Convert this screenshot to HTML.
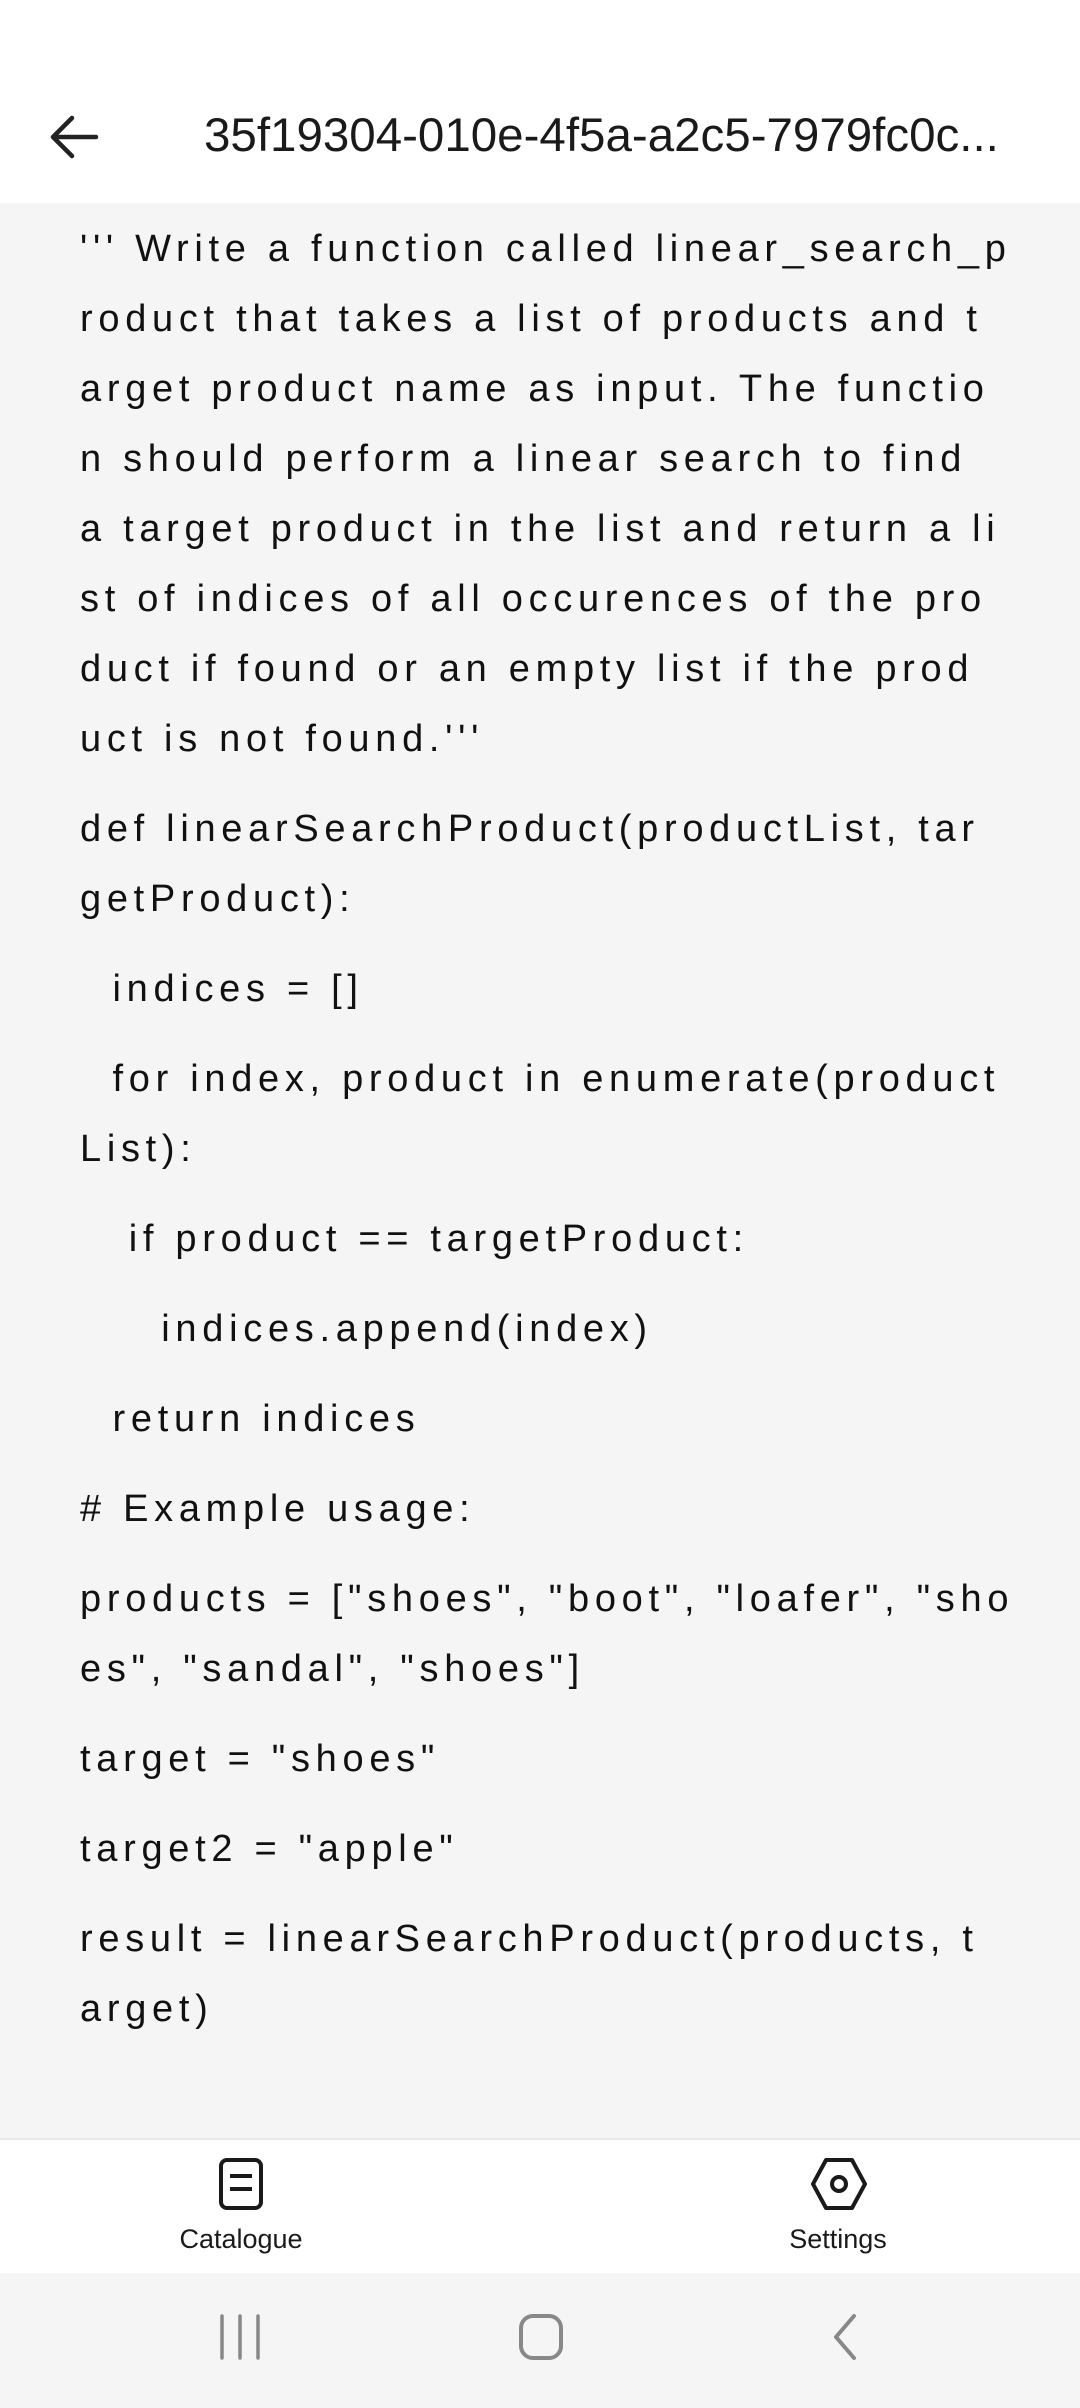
<!DOCTYPE html>
<html><head><meta charset="utf-8"><style>
*{margin:0;padding:0;box-sizing:border-box}
body{width:1080px;height:2408px;background:#f5f5f5;font-family:"Liberation Sans",sans-serif;position:relative;overflow:hidden;color:#111}
.top{position:absolute;left:0;top:0;width:1080px;height:203px;background:#fff}
.title{position:absolute;left:204px;top:107px;font-size:47.5px;line-height:58px;color:#1a1a1a;white-space:nowrap}
.content{position:absolute;left:0;top:203px;width:1080px;height:1935px;background:#f5f5f5}
.txt{position:absolute;left:80px;top:214px;font-size:38px;line-height:70px;letter-spacing:5.7px;white-space:pre;color:#111}
.p{margin-bottom:20px}
.nav{position:absolute;left:0;top:2138px;width:1080px;height:135px;background:#fff;border-top:2px solid #e8e8e8}
.lbl{position:absolute;top:84px;font-size:27px;color:#1a1a1a;transform:translateX(-50%)}
.sys{position:absolute;left:0;top:2273px;width:1080px;height:135px;background:#f5f5f5}
</style></head><body>
<div class="top">
<svg style="position:absolute;left:48px;top:112px" width="52" height="50" viewBox="0 0 52 50"><path d="M48 25H6M24 6L5 25l19 19" fill="none" stroke="#222" stroke-width="4.5" stroke-linecap="round" stroke-linejoin="round"/></svg>
<div class="title">35f19304-010e-4f5a-a2c5-7979fc0c...</div>
</div>
<div class="content"></div>
<div class="txt"><div class="p">''' Write a function called linear_search_p
roduct that takes a list of products and t
arget product name as input. The functio
n should perform a linear search to find
a target product in the list and return a li
st of indices of all occurences of the pro
duct if found or an empty list if the prod
uct is not found.'''</div><div class="p">def linearSearchProduct(productList, tar
getProduct):</div><div class="p">  indices = []</div><div class="p">  for index, product in enumerate(product
List):</div><div class="p">   if product == targetProduct:</div><div class="p">     indices.append(index)</div><div class="p">  return indices</div><div class="p"># Example usage:</div><div class="p">products = ["shoes", "boot", "loafer", "sho
es", "sandal", "shoes"]</div><div class="p">target = "shoes"</div><div class="p">target2 = "apple"</div><div class="p">result = linearSearchProduct(products, t
arget)</div></div>
<div class="nav">
<svg style="position:absolute;left:218px;top:17px" width="46" height="54" viewBox="0 0 46 54"><rect x="3" y="3" width="40" height="48" rx="6" fill="none" stroke="#1a1a1a" stroke-width="4"/><path d="M12 19h22M12 32h22" stroke="#1a1a1a" stroke-width="4"/></svg>
<svg style="position:absolute;left:810px;top:17px" width="58" height="54" viewBox="0 0 58 54"><path d="M16 3h26l13 24-13 24H16L3 27z" fill="none" stroke="#1a1a1a" stroke-width="4" stroke-linejoin="round"/><circle cx="29" cy="27" r="7" fill="none" stroke="#1a1a1a" stroke-width="4"/></svg>
<div class="lbl" style="left:241px">Catalogue</div>
<div class="lbl" style="left:838px">Settings</div>
</div>
<div class="sys">
<svg style="position:absolute;left:218px;top:40px" width="44" height="48"><path d="M4 3v42M22 3v42M40 3v42" stroke="#888" stroke-width="3.5" stroke-linecap="round"/></svg>
<svg style="position:absolute;left:518px;top:40px" width="48" height="48"><rect x="3" y="3" width="40" height="42" rx="12" fill="none" stroke="#888" stroke-width="4"/></svg>
<svg style="position:absolute;left:826px;top:40px" width="36" height="48"><path d="M28 3L10 24l18 21" fill="none" stroke="#888" stroke-width="4" stroke-linecap="round" stroke-linejoin="round"/></svg>
</div>
</body></html>
